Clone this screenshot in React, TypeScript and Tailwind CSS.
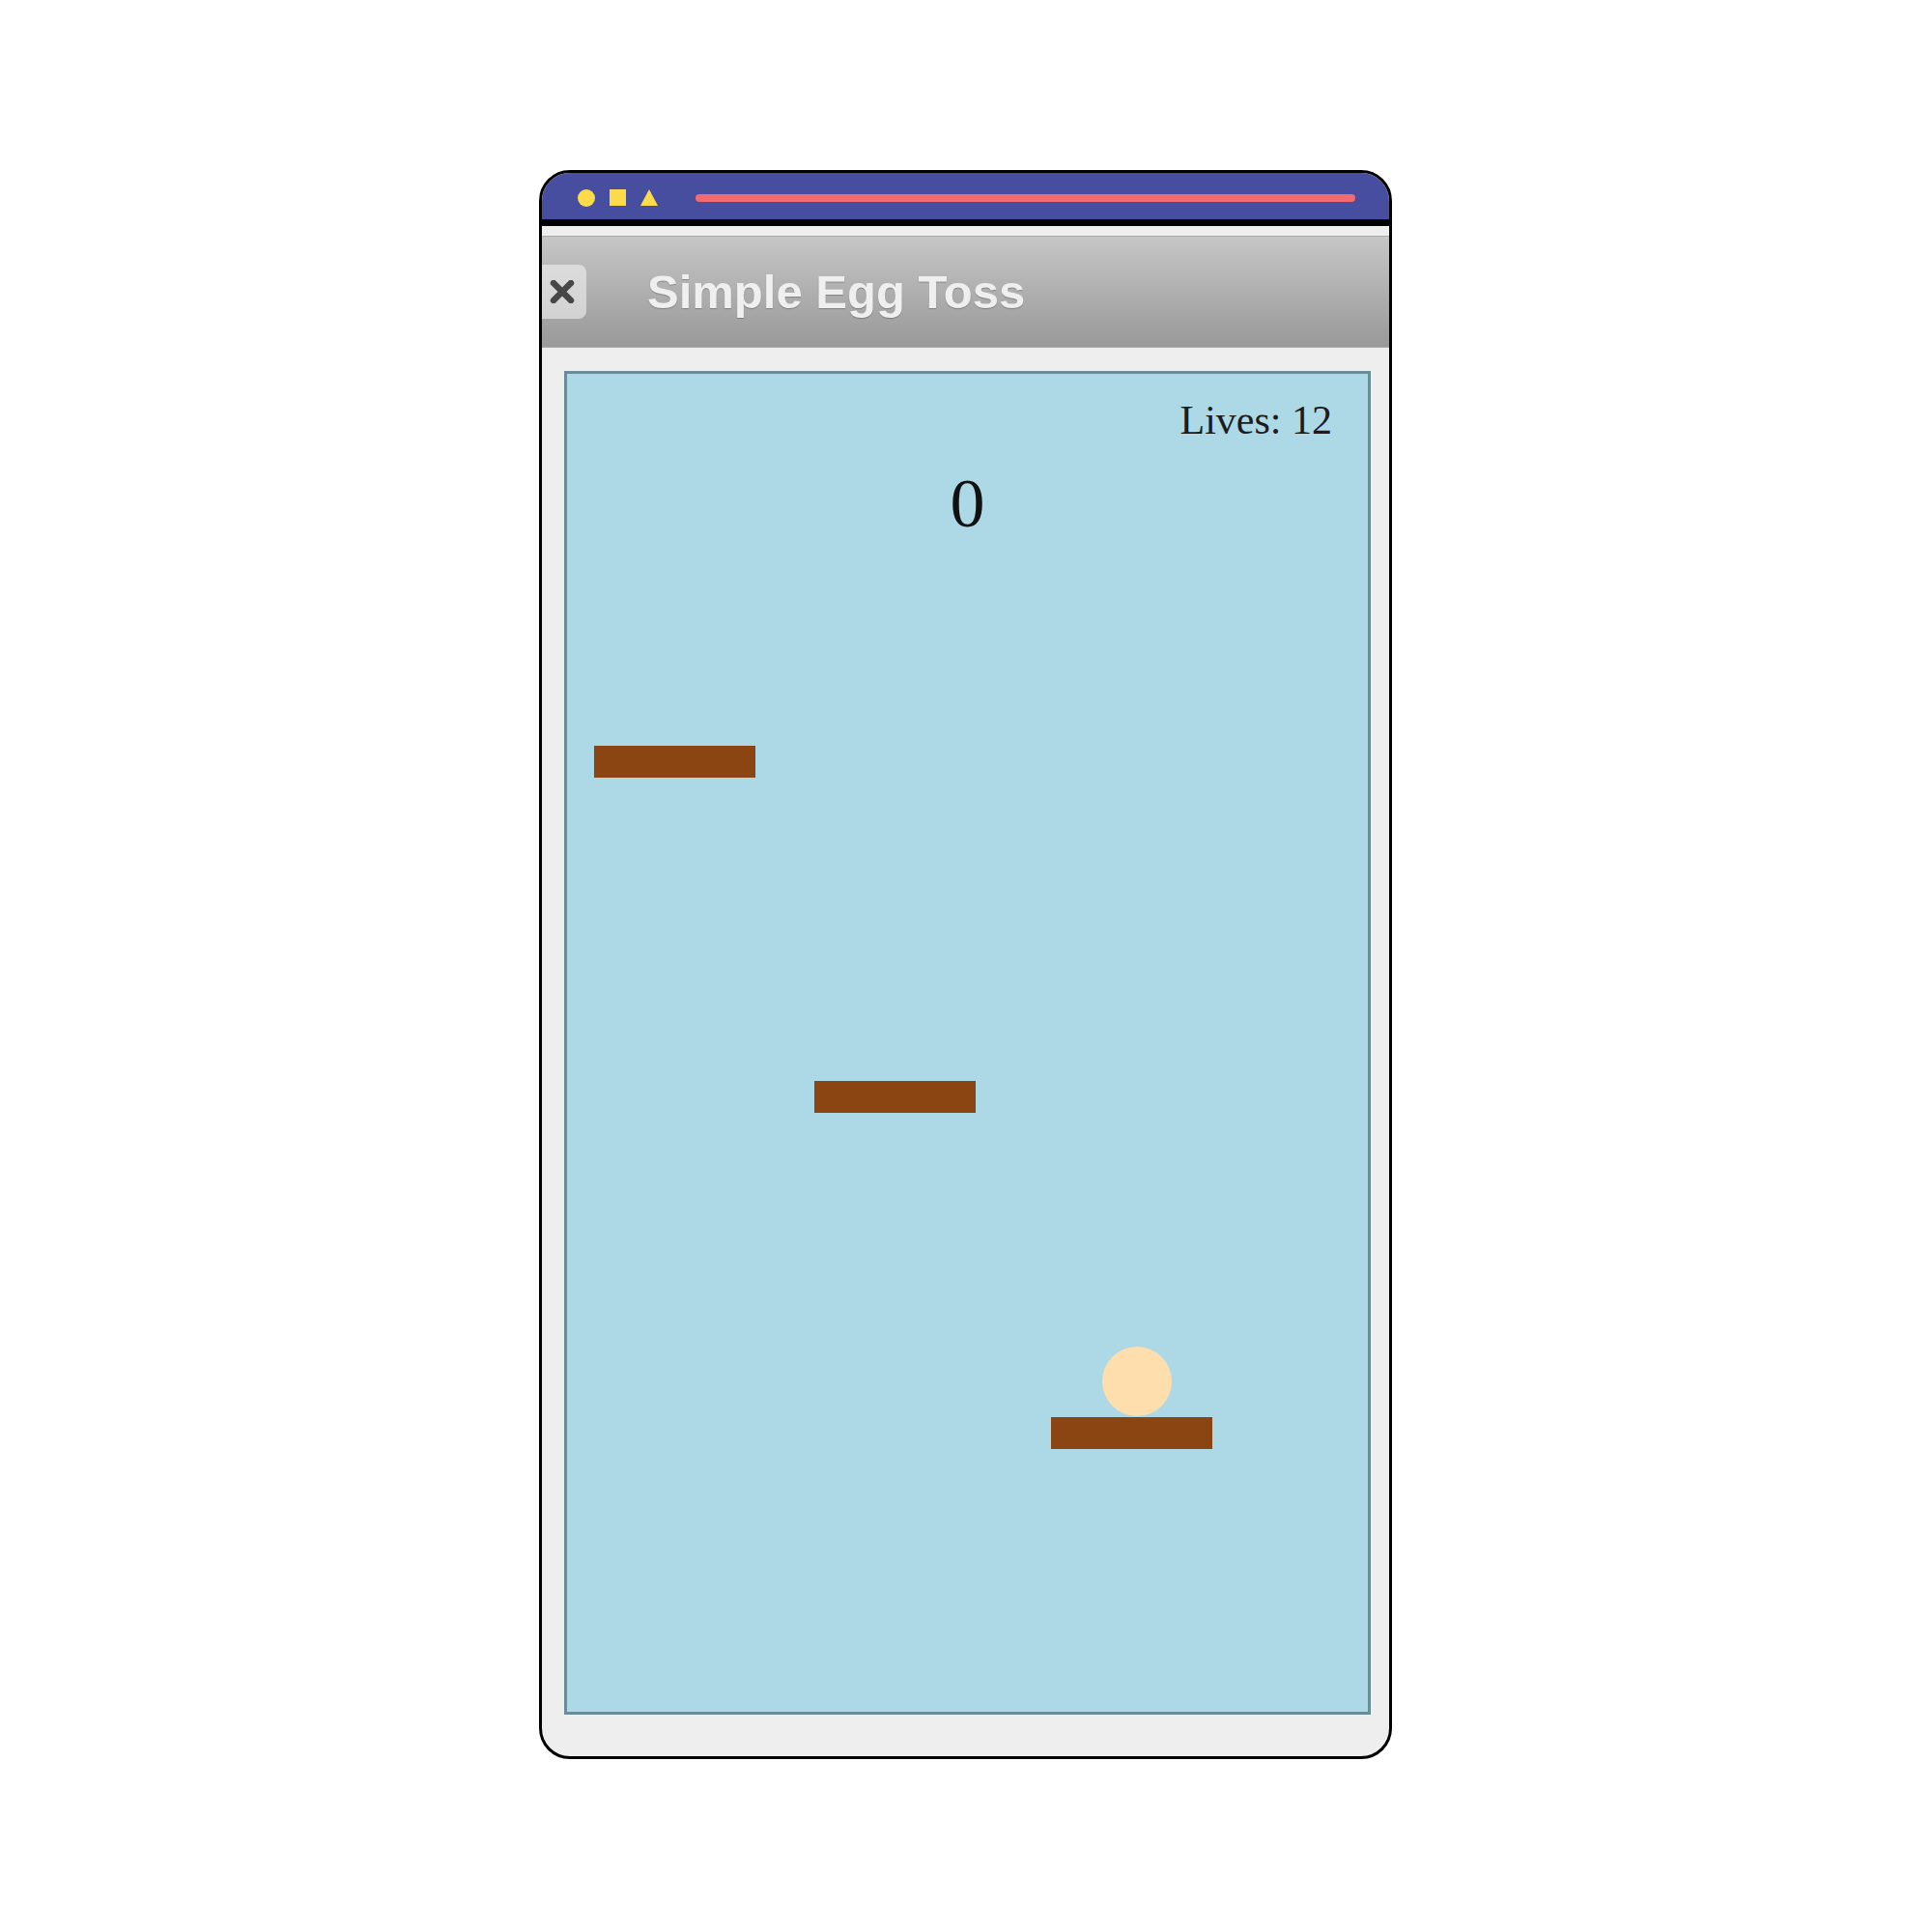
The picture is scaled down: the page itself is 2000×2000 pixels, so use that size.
import React from "react";

const platforms = [
  { left: 28, top: 385 },
  { left: 256, top: 732 },
  { left: 501, top: 1080 },
];

export default function App() {
  return (
    <div className="min-h-screen w-full bg-white">
      <div className="flex pl-[558px] pt-[176px]">
        <div className="flex h-[1645px] w-[883px] flex-col overflow-hidden rounded-[32px] border-[3px] border-black bg-[#eeeeee]">
          {/* Top bar: shapes + progress line */}
          <div className="flex h-[55px] shrink-0 items-center border-b-[7px] border-black bg-[#474e9f] pl-[37px] pr-[35px] pt-[3px]">
            <div className="h-[18px] w-[18px] rounded-full bg-[#fcdb4a]" />
            <div className="ml-[15px] h-[17px] w-[17px] bg-[#fcdb4a]" />
            <svg className="ml-[15px]" width="18" height="17" viewBox="0 0 18 17">
              <polygon points="9,0 18,17 0,17" fill="#fcdb4a" />
            </svg>
            <div className="ml-[39px] h-[8px] flex-1 rounded-full bg-[#f26b6e]" />
          </div>

          {/* Title header */}
          <div className="mt-[10px] flex h-[116px] shrink-0 items-center border-y border-[#a9a9a9] bg-gradient-to-b from-[#c6c6c6] to-[#999999]">
            <button
              type="button"
              className="-ml-[10px] flex h-[56px] w-[56px] items-center justify-center rounded-[8px] bg-gradient-to-b from-[#dcdcdc] to-[#d2d2d2] pl-[6px]"
            >
              <svg width="26" height="24" viewBox="0 0 26 24">
                <path d="M4 3 L22 21 M22 3 L4 21" stroke="#474747" strokeWidth="6.5" strokeLinecap="round" />
              </svg>
            </button>
            <span
              className="ml-[63px] text-[49px] font-bold leading-none text-[#efefef] [text-shadow:0_1px_1px_rgba(0,0,0,0.25)]"
              style={{ fontFamily: '"Liberation Sans", Arial, sans-serif' }}
            >
              Simple Egg Toss
            </span>
          </div>

          {/* Game canvas */}
          <div className="ml-[23px] mt-[24px] h-[1391px] w-[835px] shrink-0 border-[3px] border-[#6a8c96] bg-[#add8e6]">
            <div
              className="relative h-full w-full"
              style={{ fontFamily: '"Liberation Serif", "Times New Roman", serif' }}
            >
              <div className="absolute right-[37px] top-[27px] text-[42px] leading-none text-[#1c1c1c]">
                Lives: 12
              </div>
              <div className="absolute left-0 right-0 top-[98px] text-center text-[72px] leading-none text-[#111111]">
                0
              </div>
              {platforms.map((p, i) => (
                <div
                  key={i}
                  className="absolute h-[33px] w-[167px] bg-[#8b4513]"
                  style={{ left: p.left, top: p.top }}
                />
              ))}
              <div className="absolute left-[554px] top-[1007px] h-[72px] w-[72px] rounded-full bg-[#ffdead]" />
            </div>
          </div>
        </div>
      </div>
    </div>
  );
}
